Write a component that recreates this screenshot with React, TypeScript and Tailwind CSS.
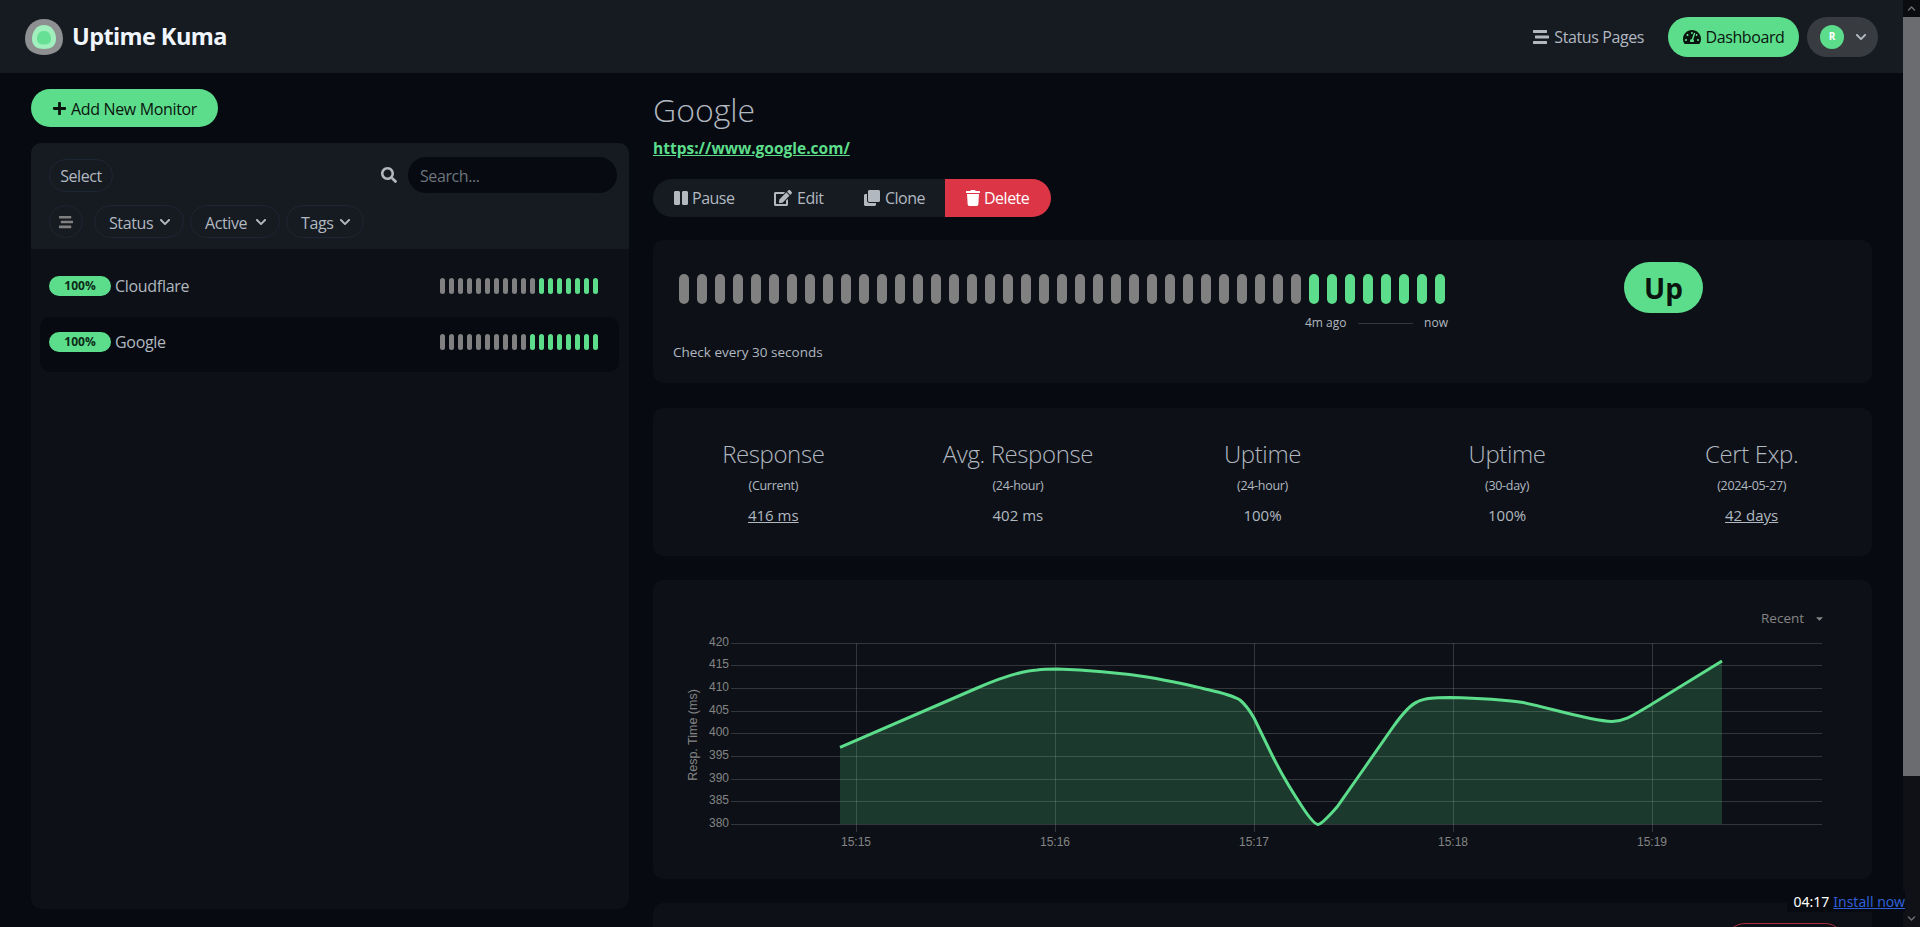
import React from "react";
import {
  FaPlus, FaSearch, FaStream, FaTachometerAlt, FaPause, FaEdit, FaClone, FaTrash, FaChevronDown, FaChevronUp, FaCaretDown,
} from "react-icons/fa";

const FONT = "font-['Open_Sans','Noto_Sans',sans-serif]";

function Logo() {
  return (
    <svg width="40" height="36" viewBox="0 0 40 36" className="shrink-0">
      <path d="M20 0C31 0 39 8 39 20C39 31 30 36 20 36C10 36 1 31 1 20C1 8 9 0 20 0Z" fill="#8d8f90" />
      <path d="M20 6C27 6 32 12 32 20C32 27 27 30 20 30C13 30 8 27 8 20C8 12 13 6 20 6Z" fill="#a0efbc" />
      <path d="M20 12C24.500 12 27 15.500 27 20C27 23.500 24.500 25.500 20 25.500C15.500 25.500 13 23.500 13 20C13 15.500 15.500 12 20 12Z" fill="#66e094" />
    </svg>
  );
}

function FilterButton({ label, className }: { label: string; className: string }) {
  return (
    <button className={`h-[33px] rounded-full border border-[#1d2634] flex items-center justify-between text-[16px] tracking-[-0.4px] text-[#b1b8c0] ${className}`}>
      <span className="pt-[2px]">{label}</span>
      <FaChevronDown className="text-[12px]" />
    </button>
  );
}

function SmallBeats({ grey, green }: { grey: number; green: number }) {
  return (
    <div className="flex gap-[3.6px]">
      {Array.from({ length: grey }).map((_, i) => (
        <div key={i} className="w-[5.4px] h-[16px] rounded-full bg-[#808080]" />
      ))}
      {Array.from({ length: green }).map((_, i) => (
        <div key={i} className="w-[5.4px] h-[16px] rounded-full bg-[#5cdd8b]" />
      ))}
    </div>
  );
}

function MonitorRow({ name, grey, green, active }: { name: string; grey: number; green: number; active?: boolean }) {
  return (
    <div className={`h-[55px] rounded-[10px] pl-[9px] pr-[21px] pb-[6px] flex items-center ${active ? "mt-[1px] bg-[#070a10]" : ""}`}>
      <span className="w-[62px] h-[20px] rounded-full bg-[#5cdd8b] text-[#0b2a17] text-[12px] font-bold flex items-center justify-center">100%</span>
      <span className="ml-[4px] text-[16px] tracking-[-0.3px] text-[#b1b8c0] flex-1">{name}</span>
      <SmallBeats grey={grey} green={green} />
    </div>
  );
}

function Stat({ title, sub, value, link }: { title: string; sub: string; value: string; link?: boolean }) {
  return (
    <div className="flex-1 flex flex-col items-center text-[#b1b8c0]">
      <div className="text-[24px] leading-[30px] font-light tracking-[-0.4px]">{title}</div>
      <div className="text-[12.5px] leading-[16px] mt-[9px] tracking-[-0.3px]">{sub}</div>
      <div className={`text-[15px] leading-[20px] mt-[11px] ${link ? "underline" : ""}`}>{value}</div>
    </div>
  );
}

function BtnGroupItem({ icon, label, className }: { icon: React.ReactNode; label: string; className: string }) {
  return (
    <button className={`h-full shrink-0 flex items-center text-[16px] tracking-[-0.5px] ${className}`}>
      {icon}
      <span>{label}</span>
    </button>
  );
}

const yTicks = [420, 415, 410, 405, 400, 395, 390, 385, 380];
const yPos = [643, 665, 688, 711, 733, 756, 779, 801, 824];
const xTicks = [
  ["15:15", 856],
  ["15:16", 1055],
  ["15:17", 1254],
  ["15:18", 1453],
  ["15:19", 1652],
] as const;
const curve =
  "M840 747.300 L976 688.500 C1000 678 1022 671 1037 670 C1045 669 1050 669 1057 669 C1090 670 1120 673 1147 677 C1170 681 1190 685 1205 689 C1218 692 1232 695 1240 700 C1246 705 1250 711 1254 718 L1273 757 C1283 777 1293 793 1303 808 C1309 817 1314 824 1318 824.500 C1322 824 1330 815 1337 807 L1363 770 L1393 727 C1403 713 1410 705 1417 702 C1425 698 1435 697.700 1450 697.500 C1475 698 1500 699 1523 702.500 C1550 708 1590 721 1612 721.500 C1625 721 1632 716 1652 704 L1722 661";

function Chart() {
  return (
    <svg width="1219" height="299" viewBox="653 580 1219 299" className="block" style={{ fontFamily: "'Liberation Sans', sans-serif" }}>
      {yPos.map((y) => (
        <line key={y} x1="731" x2="1822" y1={y + 0.5} y2={y + 0.5} stroke="#848484" strokeOpacity="0.33" />
      ))}
      {xTicks.map(([, x]) => (
        <line key={x} x1={x + 0.5} x2={x + 0.5} y1="643" y2="832" stroke="#848484" strokeOpacity="0.33" />
      ))}
      <path d={`${curve} L1722 824 L840 824 Z`} fill="#5cdd8b" fillOpacity="0.2" />
      <path d={curve} fill="none" stroke="#5cdd8b" strokeWidth="3" />
      {yTicks.map((t, i) => (
        <text key={t} x="729" y={yPos[i] + 3} textAnchor="end" fontSize="12" fill="#848484">{t}</text>
      ))}
      {xTicks.map(([l, x]) => (
        <text key={l} x={x} y="846" textAnchor="middle" fontSize="12" fill="#848484">{l}</text>
      ))}
      <text transform="translate(697 735) rotate(-90)" textAnchor="middle" fontSize="12.5" fill="#848484">Resp. Time (ms)</text>
    </svg>
  );
}

export default function App() {
  return (
    <div className={`relative flex h-[927px] overflow-hidden bg-[#070a10] ${FONT}`}>
      <div className="w-[1903px] shrink-0 flex flex-col">
        <header className="h-[73px] shrink-0 bg-[#161b22] flex items-center pl-[24px] pr-[25px]">
          <Logo />
          <span className="ml-[8px] text-[23.5px] font-bold text-[#f0f6fc] tracking-[-0.6px]">Uptime Kuma</span>
          <div className="ml-auto flex items-center">
            <FaStream className="text-[16px] text-[#b1b8c0]" />
            <span className="ml-[5px] pt-[1px] text-[16px] tracking-[-0.4px] text-[#b1b8c0]">Status Pages</span>
            <button className="ml-[24px] h-[40px] w-[131px] rounded-full bg-[#5cdd8b] text-[#0a140e] text-[16px] tracking-[-0.4px] flex items-center justify-center gap-[5px]">
              <FaTachometerAlt className="text-[18px]" />
              Dashboard
            </button>
            <div className="ml-[8px] h-[40px] w-[71px] rounded-full bg-[#383b40] flex items-center pl-[13px] gap-[11px]">
              <span className="w-[24px] h-[24px] rounded-full bg-[#5cdd8b] text-[10px] font-bold text-white flex items-center justify-center">R</span>
              <FaChevronDown className="text-[12px] text-[#b1b8c0]" />
            </div>
          </div>
        </header>

        <main className="flex-1 min-h-0 flex gap-[24px] pl-[31px] pr-[31px]">
          <aside className="w-[598px] shrink-0 flex flex-col pt-[16px]">
            <button className="w-[187px] h-[38px] shrink-0 rounded-full bg-[#5cdd8b] text-[#0a140e] text-[16px] tracking-[-0.35px] flex items-center justify-center gap-[4px]">
              <FaPlus className="text-[15px]" />
              <span className="pt-[2px]">Add New Monitor</span>
            </button>
            <div className="mt-[16px] h-[766px] shrink-0 rounded-[10px] bg-[#0d1117] overflow-hidden">
              <div className="h-[106px] bg-[#161b22] pl-[18px] pr-[12px] pt-[14px]">
                <div className="flex items-center h-[36px]">
                  <button className="w-[64px] h-[33px] pt-[2px] rounded-full border border-[#1d2634] text-[16px] tracking-[-0.4px] text-[#b1b8c0]">Select</button>
                  <FaSearch className="ml-auto text-[16px] text-[#b1b8c0]" />
                  <div className="ml-[11px] w-[209px] h-[36px] rounded-full bg-[#070a10] pl-[12px] pt-[2px] flex items-center text-[16px] tracking-[-0.4px] text-[#6c757d]">Search...</div>
                </div>
                <div className="mt-[12px] flex items-center">
                  <button className="w-[34px] h-[33px] rounded-full border border-[#1d2634] flex items-center justify-center">
                    <FaStream className="text-[14px] text-[#808080]" />
                  </button>
                  <FilterButton label="Status" className="ml-[11px] w-[90px] pl-[14px] pr-[12px]" />
                  <FilterButton label="Active" className="ml-[6px] w-[90px] pl-[14px] pr-[12px]" />
                  <FilterButton label="Tags" className="ml-[6px] w-[78px] pl-[14px] pr-[12px]" />
                </div>
              </div>
              <div className="pl-[9px] pr-[10px] pt-[12px]">
                <MonitorRow name="Cloudflare" grey={11} green={7} />
                <MonitorRow name="Google" grey={10} green={8} active />
              </div>
            </div>
          </aside>

          <section className="flex-1 min-w-0 flex flex-col text-[#b1b8c0]">
            <h1 className="mt-[15px] shrink-0 text-[32px] leading-[44px] font-light">Google</h1>
            <a className="mt-[6px] shrink-0 text-[15.5px] leading-[20px] font-bold text-[#5cdd8b] underline">https://www.google.com/</a>
            <div className="mt-[21px] shrink-0 w-[398px] h-[38px] rounded-full bg-[#161b22] overflow-hidden flex">
              <BtnGroupItem icon={<FaPause className="text-[16px] mr-[3px]" />} label="Pause" className="w-[121px] pl-[20px]" />
              <BtnGroupItem icon={<FaEdit className="text-[18px] mr-[5px]" />} label="Edit" className="w-[90px]" />
              <BtnGroupItem icon={<FaClone className="text-[16px] mr-[5px]" />} label="Clone" className="w-[81px]" />
              <BtnGroupItem icon={<FaTrash className="text-[16px] mr-[3px]" />} label="Delete" className="w-[106px] pl-[20px] bg-[#dc3545] text-white" />
            </div>

            <div className="mt-[23px] shrink-0 h-[143px] rounded-[10px] bg-[#0d1117] pl-[26px] pt-[34px] flex">
              <div className="w-[945px] shrink-0">
                <div className="flex gap-[8px]">
                  {Array.from({ length: 43 }).map((_, i) => (
                    <div key={i} className={`w-[10px] h-[30px] shrink-0 rounded-full ${i < 35 ? "bg-[#808080]" : "bg-[#5cdd8b]"}`} />
                  ))}
                </div>
                <div className="mt-[10px] ml-[626px] w-[143px] flex items-center text-[12px] text-[#b1b8c0]">
                  <span>4m ago</span>
                  <span className="flex-1 h-px bg-[#33383f] mx-[11px]" />
                  <span>now</span>
                </div>
                <div className="mt-[10px] -ml-[6px] text-[13.5px] leading-[20px]">Check every 30 seconds</div>
              </div>
              <div className="w-[79px] h-[51px] -mt-[12px] rounded-full bg-[#5cdd8b] text-[#0a140e] text-[28px] font-bold flex items-center justify-center">Up</div>
            </div>

            <div className="mt-[25px] shrink-0 h-[148px] rounded-[10px] bg-[#0d1117] pt-[31px]">
              <div className="-ml-[2px] w-[1223px] flex">
                <Stat title="Response" sub="(Current)" value="416 ms" link />
                <Stat title="Avg. Response" sub="(24-hour)" value="402 ms" />
                <Stat title="Uptime" sub="(24-hour)" value="100%" />
                <Stat title="Uptime" sub="(30-day)" value="100%" />
                <Stat title="Cert Exp." sub="(2024-05-27)" value="42 days" link />
              </div>
            </div>

            <div className="mt-[24px] shrink-0 h-[299px] rounded-[10px] bg-[#0d1117] relative">
              <Chart />
              <div className="absolute left-[1108px] top-[28px] flex items-center gap-[10px] text-[13.5px] leading-[20px] text-[#848484]">
                Recent
                <FaCaretDown className="text-[11px]" />
              </div>
            </div>

            <div className="mt-[24px] shrink-0 h-[100px] rounded-[10px] bg-[#0d1117] pt-[20px]">
              <div className="ml-[1072px] w-[120px] h-[40px] rounded-full border border-[#a92d3e]" />
            </div>
          </section>
        </main>
      </div>

      <div className="w-[17px] shrink-0 bg-[#0f1116] flex flex-col">
        <div className="h-[17px] flex items-center justify-center bg-[#0b0c10]">
          <FaChevronUp className="text-[9px] text-[#6b6d71]" />
        </div>
        <div className="h-[759px] bg-[#6b6c70]" />
        <div className="flex-1" />
        <div className="h-[17px] flex items-center justify-center">
          <FaChevronDown className="text-[9px] text-[#6b6d71]" />
        </div>
      </div>

      <div className="absolute right-[15px] top-[890px] h-[22px] pl-[6px] bg-[#070a10] flex items-center gap-[4px] text-[14px] text-white font-['Noto_Sans',sans-serif]">
        <span>04:17</span>
        <a className="text-[#2e5fd6] underline">Install now</a>
      </div>
    </div>
  );
}
